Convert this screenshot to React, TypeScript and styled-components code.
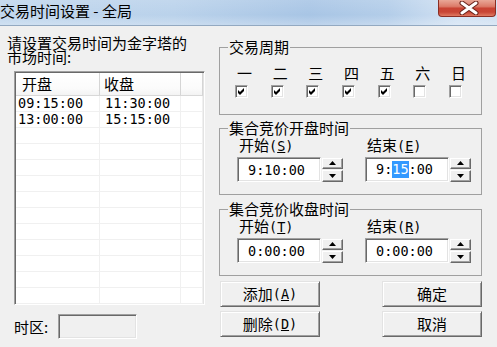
import React from 'react';
import styled, { createGlobalStyle } from 'styled-components';

const GlobalStyle = createGlobalStyle`
  html, body { margin: 0; padding: 0; background: #f0f0f0; }
  body {
    font-family: "Noto Sans CJK SC", "Liberation Sans", sans-serif;
    font-size: 15px;
    color: #000;
  }
  * { box-sizing: border-box; }
`;

const Window = styled.div`
  width: 497px;
  height: 347px;
  overflow: hidden;
  background: #f0f0f0;
  display: flex;
  flex-direction: column;
`;

const TitleBar = styled.div`
  flex: none;
  height: 26px;
  display: flex;
  justify-content: space-between;
  align-items: flex-start;
  border-bottom: 1px solid #93a9c1;
  background:
    linear-gradient(180deg, rgba(255,255,255,0.12) 0%, rgba(255,255,255,0) 60%, rgba(255,255,255,0.25) 100%),
    linear-gradient(90deg, #c0d6ed 0%, #bad2eb 35%, #a8c5e5 62%, #b3cde9 78%, #d2e2f3 92%, #cfe0f2 100%);
`;

const TitleText = styled.div`
  padding-top: 2px;
  font-size: 15px;
  line-height: 18px;
  white-space: nowrap;
`;

const CloseButton = styled.div`
  width: 58px;
  height: 17px;
  margin-right: 1px;
  padding-left: 4px;
  display: flex;
  align-items: center;
  justify-content: center;
  border: 1px solid #8a2e24;
  border-top: none;
  border-radius: 0 0 4px 4px;
  background: linear-gradient(180deg, #e9a797 0%, #dc7b69 40%, #c94333 52%, #c84535 75%, #e07a62 100%);
`;

const Body = styled.div`
  flex: 1;
  display: flex;
  gap: 14px;
`;

const LeftPane = styled.div`
  width: 205px;
  padding: 10px 0 0 7px;
  display: flex;
  flex-direction: column;
`;

const Intro = styled.div`
  line-height: 14px;
  white-space: nowrap;
`;

const ListBox = styled.div`
  margin: 7px 0 0 7px;
  width: 191px;
  height: 234px;
  overflow: hidden;
  background: #fff;
  padding: 1px;
  border: 1px solid;
  border-color: #a0a0a0 #fff #fff #a0a0a0;
  box-shadow: inset 1px 1px #696969, inset -1px -1px #e3e3e3;
  display: grid;
  grid-template-columns: 84px 81px 1fr;
  grid-auto-rows: 16px;
  grid-template-rows: 23px;
  align-content: start;
`;

const HeadCell = styled.div<{ $pad: number }>`
  padding-left: ${p => p.$pad}px;
  line-height: 22px;
  border-bottom: 1px solid #d8d8d8;
  border-right: 1px solid #d5d5d5;
  background: linear-gradient(180deg, #ffffff 0%, #fbfbfb 70%, #f3f3f3 100%);
  white-space: nowrap;
`;

const Cell = styled.div<{ $pad: number }>`
  padding-left: ${p => p.$pad}px;
  border-right: 1px solid #f0f0f0;
  border-bottom: 1px solid #f0f0f0;
  font-family: "DejaVu Sans Mono", "Liberation Mono", monospace;
  font-size: 13.5px;
  line-height: 15px;
  white-space: nowrap;
`;

const ZoneRow = styled.div`
  margin-top: 9px;
  padding-left: 7px;
  display: flex;
  align-items: center;
`;

const ZoneLabel = styled.div`
  width: 44px;
  line-height: 16px;
`;

const SunkenBox = styled.div<{ $w: number; $bg: string }>`
  width: ${p => p.$w}px;
  height: 25px;
  background: ${p => p.$bg};
  border: 1px solid;
  border-color: #a0a0a0 #fff #fff #a0a0a0;
  box-shadow: inset 1px 1px #696969, inset -1px -1px #e3e3e3;
  display: flex;
  align-items: center;
  padding-left: 10px;
`;

const RightPane = styled.div`
  width: 263px;
  padding-top: 13px;
  display: flex;
  flex-direction: column;
`;

const Group = styled.fieldset<{ $mt: number }>`
  margin: ${p => p.$mt}px 0 0 0;
  padding: 0;
  min-inline-size: 0;
  border: 1px solid #a0a0a0;
`;

const Legend = styled.legend`
  margin-left: 8px;
  padding: 0 1px;
  line-height: 16px;
  font-size: 15px;
`;

const DaysGrid = styled.div`
  display: grid;
  grid-template-columns: repeat(7, 35.67px);
  row-gap: 4px;
  padding: 10px 0 16px 15px;
`;

const DayLabel = styled.div`
  margin-left: 2px;
  line-height: 16px;
`;

const CheckBox = styled.div`
  width: 13px;
  height: 13px;
  background: #fff;
  border: 1px solid;
  border-color: #a0a0a0 #fff #fff #a0a0a0;
  box-shadow: inset 1px 1px #696969, inset -1px -1px #e3e3e3;
  display: flex;
  align-items: center;
  justify-content: center;
`;

const TimeRow = styled.div`
  display: flex;
  gap: 22px;
  padding: 1px 0 12px 17px;
`;

const TimeField = styled.div`
  display: flex;
  flex-direction: column;
  gap: 3px;
`;

const FieldLabel = styled.div`
  margin-left: 2px;
  line-height: 16px;
  white-space: nowrap;
`;

const SpinRow = styled.div`
  display: flex;
  align-items: center;
  gap: 1px;
`;

const Spin = styled.div`
  display: flex;
  flex-direction: column;
  gap: 1px;
`;

const SpinButton = styled.div`
  width: 21px;
  height: 11.5px;
  background: #f0f0f0;
  border: 1px solid;
  border-color: #fff #696969 #696969 #fff;
  box-shadow: inset -1px -1px #a0a0a0;
  display: flex;
  align-items: center;
  justify-content: center;
`;

const Mono = styled.span`
  font-family: "DejaVu Sans Mono", "Liberation Mono", monospace;
  font-size: 13.5px;
  white-space: pre;
`;

const Selected = styled.span`
  background: #3399ff;
  color: #fff;
  line-height: 17px;
  display: inline-block;
`;

const Accel = styled.span`
  text-decoration: underline;
  text-underline-offset: 1px;
`;

const ButtonGrid = styled.div`
  margin-top: 5px;
  padding-left: 1px;
  display: grid;
  grid-template-columns: 100px 100px;
  justify-content: space-between;
  row-gap: 4px;
`;

const Button = styled.div`
  height: 26px;
  background: #f0f0f0;
  border: 1px solid;
  border-color: #e3e3e3 #696969 #696969 #e3e3e3;
  box-shadow: inset 1px 1px #fff, inset -1px -1px #a0a0a0;
  display: flex;
  align-items: center;
  justify-content: center;
  line-height: 16px;
  white-space: nowrap;
`;

const Label = ({ text, k }: { text: string; k: string }) => (
  <>
    {text}
    <Mono>(<Accel>{k}</Accel>)</Mono>
  </>
);

const Arrow = ({ up }: { up: boolean }) => (
  <svg width="7" height="4" viewBox="0 0 7 4">
    <polygon points={up ? '3.5,0 7,4 0,4' : '0,0 7,0 3.5,4'} fill="#000" />
  </svg>
);

const SpinEdit = ({ children }: { children: React.ReactNode }) => (
  <SpinRow>
    <SunkenBox $w={84} $bg="#fff">
      <Mono>{children}</Mono>
    </SunkenBox>
    <Spin>
      <SpinButton><Arrow up /></SpinButton>
      <SpinButton><Arrow up={false} /></SpinButton>
    </Spin>
  </SpinRow>
);

const Check = () => (
  <svg width="11" height="11" viewBox="0 0 11 11">
    <polygon points="2,4 4,6 8,2 8,5 4,9 2,7" fill="#000" />
  </svg>
);

export default function App() {
  const days = ['一', '二', '三', '四', '五', '六', '日'];
  const checked = [true, true, true, true, true, false, false];
  const rows: string[][] = [
    ['09:15:00', '11:30:00'],
    ['13:00:00', '15:15:00'],
  ];
  for (let i = 0; i < 12; i++) rows.push(['', '']);

  return (
    <>
      <GlobalStyle />
      <Window>
        <TitleBar>
          <TitleText>交易时间设置 - 全局</TitleText>
          <CloseButton>
            <svg width="22" height="14" viewBox="0 0 22 14">
              <path d="M4 2 L18 12 M18 2 L4 12" stroke="#6a2219" strokeWidth="5" strokeLinecap="round" />
              <path d="M4 2 L18 12 M18 2 L4 12" stroke="#fff" strokeWidth="3" strokeLinecap="round" />
            </svg>
          </CloseButton>
        </TitleBar>
        <Body>
          <LeftPane>
            <Intro>
              请设置交易时间为金字塔的
              <br />
              市场时间:
            </Intro>
            <ListBox>
              <HeadCell $pad={6}>开盘</HeadCell>
              <HeadCell $pad={4}>收盘</HeadCell>
              <HeadCell $pad={0} />
              {rows.map((r, i) => (
                <React.Fragment key={i}>
                  <Cell $pad={2}>{r[0]}</Cell>
                  <Cell $pad={5}>{r[1]}</Cell>
                  <Cell $pad={0} />
                </React.Fragment>
              ))}
            </ListBox>
            <ZoneRow>
              <ZoneLabel>时区:</ZoneLabel>
              <SunkenBox $w={79} $bg="#f0f0f0" />
            </ZoneRow>
          </LeftPane>
          <RightPane>
            <Group $mt={0}>
              <Legend>交易周期</Legend>
              <DaysGrid>
                {days.map(d => (
                  <DayLabel key={d}>{d}</DayLabel>
                ))}
                {checked.map((c, i) => (
                  <CheckBox key={i}>{c && <Check />}</CheckBox>
                ))}
              </DaysGrid>
            </Group>
            <Group $mt={5}>
              <Legend>集合竞价开盘时间</Legend>
              <TimeRow>
                <TimeField>
                  <FieldLabel><Label text="开始" k="S" /></FieldLabel>
                  <SpinEdit>9:10:00</SpinEdit>
                </TimeField>
                <TimeField>
                  <FieldLabel><Label text="结束" k="E" /></FieldLabel>
                  <SpinEdit>
                    9:<Selected>15</Selected>:00
                  </SpinEdit>
                </TimeField>
              </TimeRow>
            </Group>
            <Group $mt={6}>
              <Legend>集合竞价收盘时间</Legend>
              <TimeRow>
                <TimeField>
                  <FieldLabel><Label text="开始" k="T" /></FieldLabel>
                  <SpinEdit>0:00:00</SpinEdit>
                </TimeField>
                <TimeField>
                  <FieldLabel><Label text="结束" k="R" /></FieldLabel>
                  <SpinEdit>0:00:00</SpinEdit>
                </TimeField>
              </TimeRow>
            </Group>
            <ButtonGrid>
              <Button><Label text="添加" k="A" /></Button>
              <Button>确定</Button>
              <Button><Label text="删除" k="D" /></Button>
              <Button>取消</Button>
            </ButtonGrid>
          </RightPane>
        </Body>
      </Window>
    </>
  );
}
